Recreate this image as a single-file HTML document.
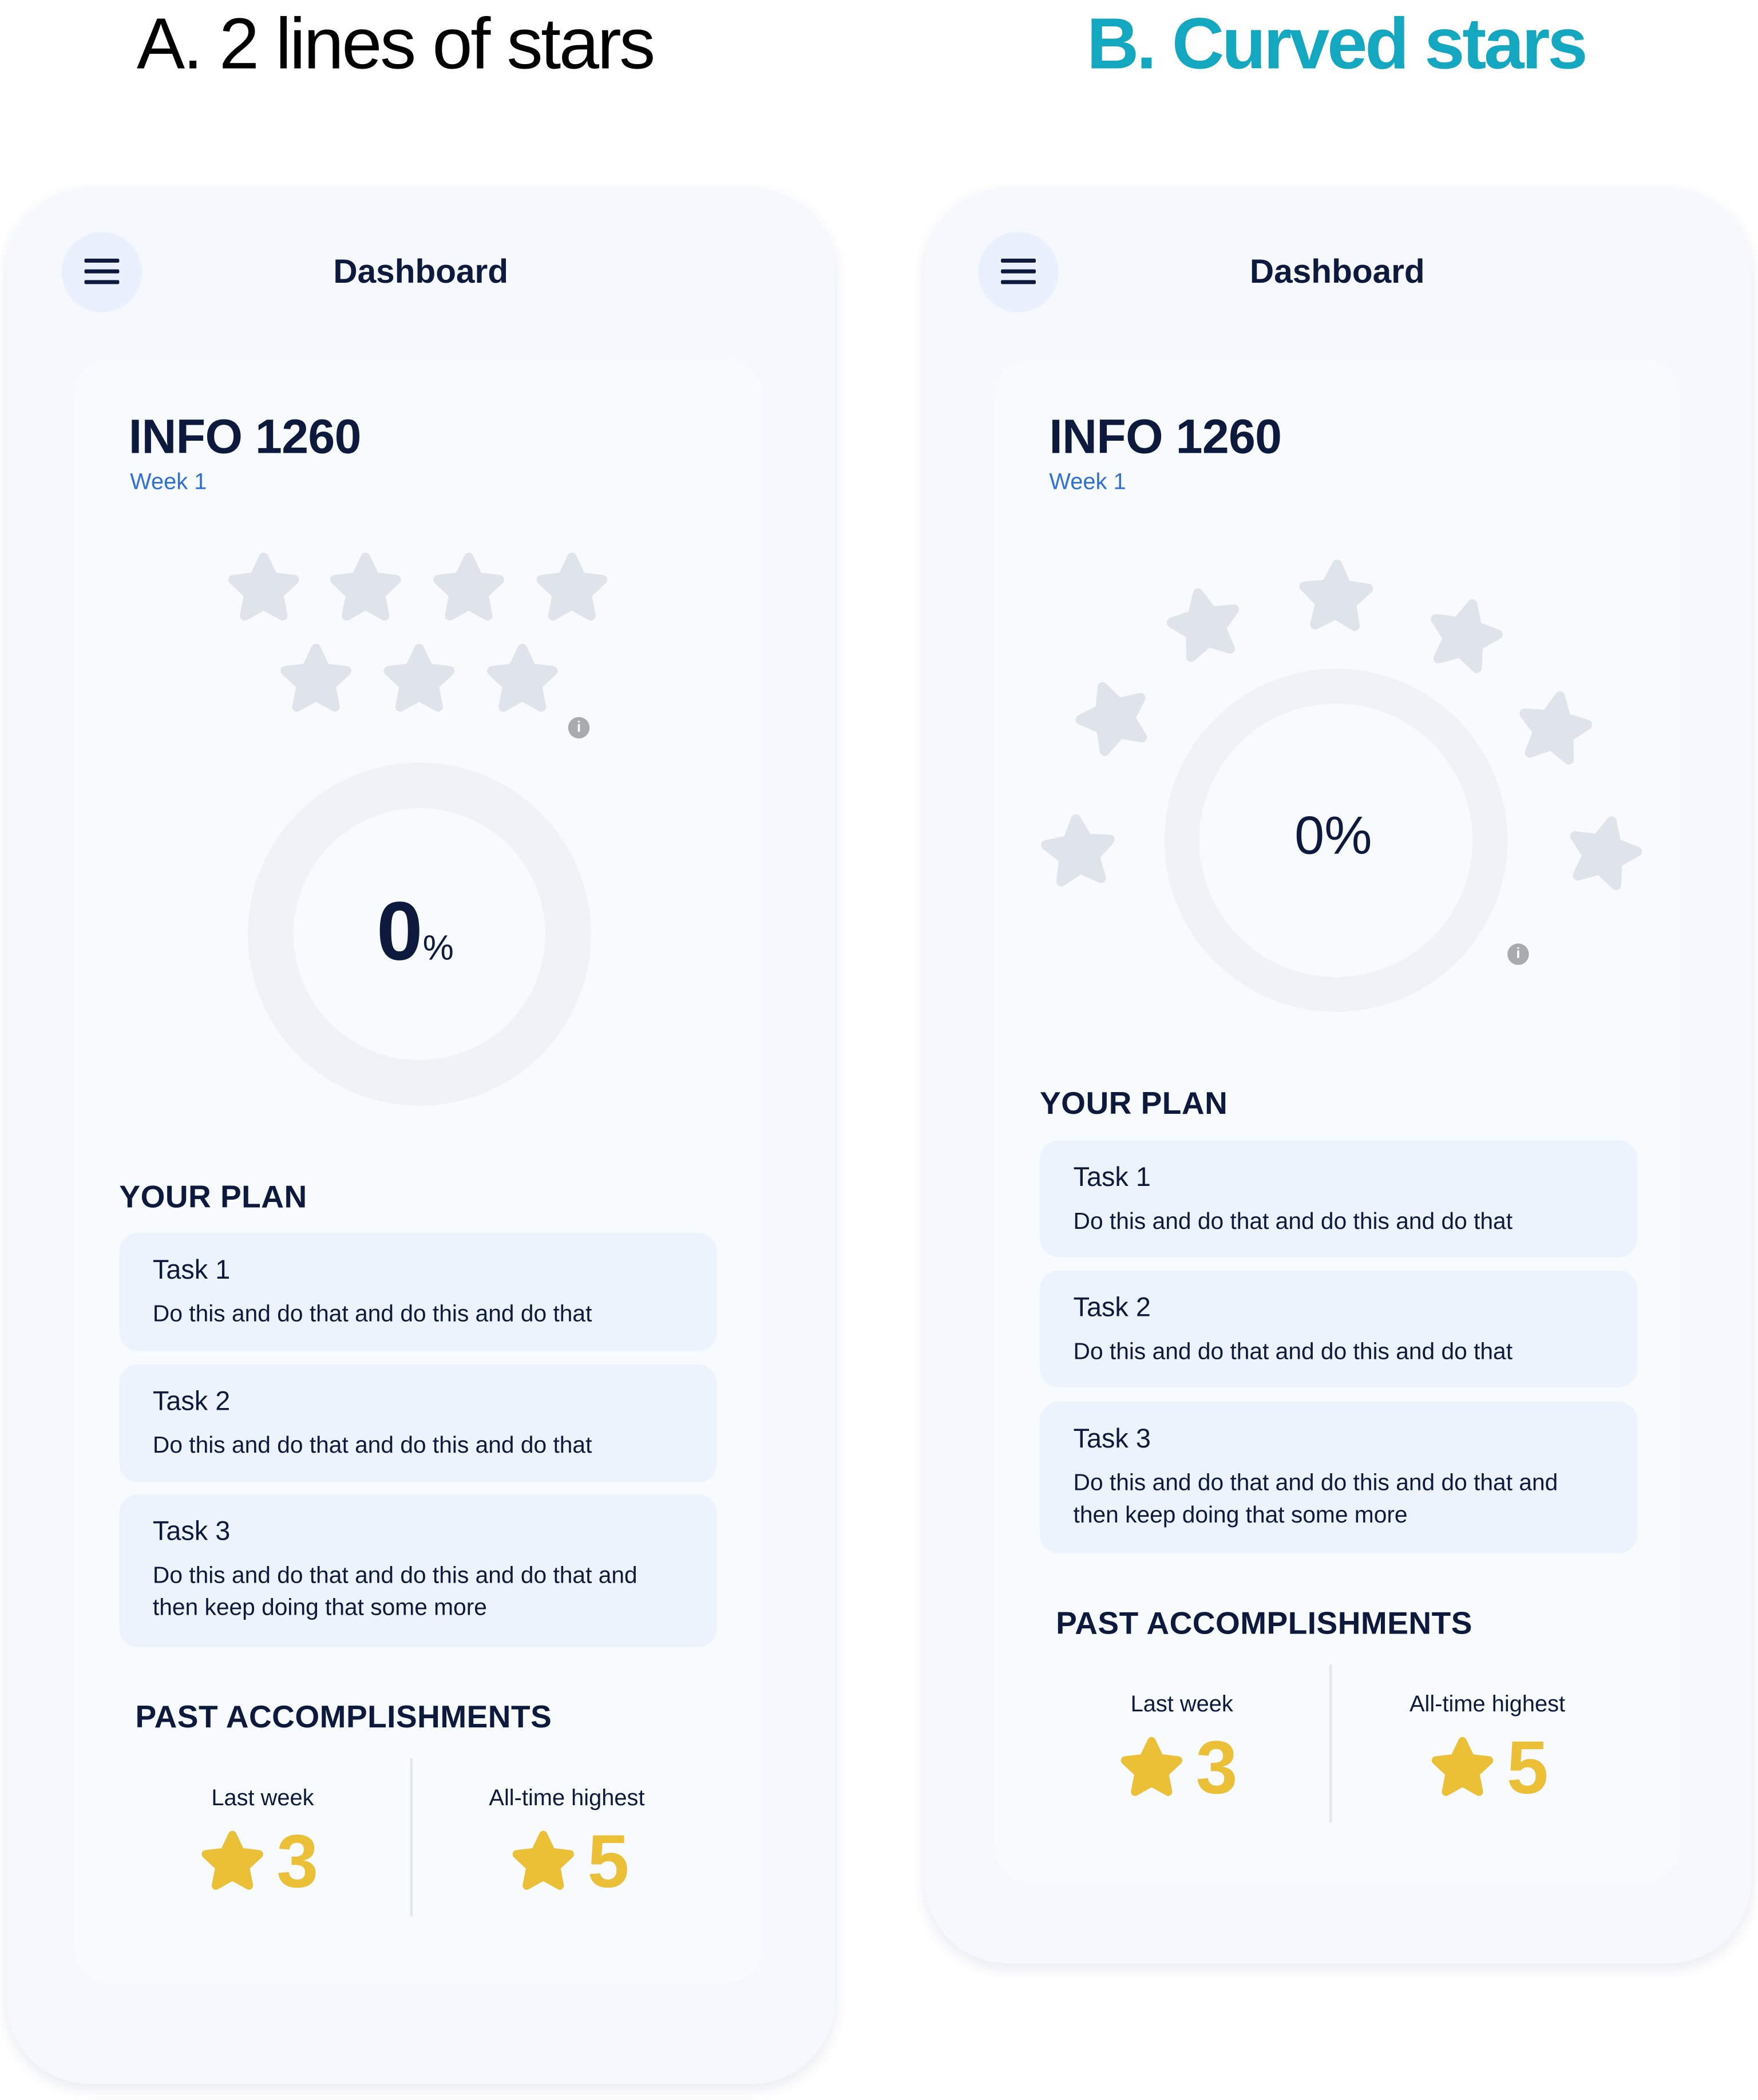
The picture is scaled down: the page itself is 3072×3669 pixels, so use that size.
<!DOCTYPE html>
<html><head><meta charset="utf-8"><style>
html,body{margin:0;padding:0;background:#fff;width:3072px;height:3668px;overflow:hidden}
#w{position:absolute;left:0;top:0;width:1312px;height:1567px;transform:scale(2.3415);transform-origin:0 0;font-family:"Liberation Sans",sans-serif;color:#0d1a3d}
.abs{position:absolute}
.title{position:absolute;top:2px;font-size:54px;letter-spacing:-1.5px;white-space:nowrap}
.phone{position:absolute;background:#f5f8fd;border-radius:62px;box-shadow:0 4px 10px rgba(40,60,100,.10)}
.ham{position:absolute;width:60px;height:60px;border-radius:50%;background:#eaf1fc}
.ham i{position:absolute;left:17px;width:26px;height:3px;background:#0d1a3d;border-radius:1px}
.dash{position:absolute;font-size:25px;font-weight:bold;transform:translateX(-50%);top:189px}
.card{position:absolute;background:#f8fbfe;border-radius:28px}
.h1{position:absolute;font-size:36px;font-weight:bold;letter-spacing:-.3px}
.wk{position:absolute;font-size:17px;color:#2f6fd6}
.sec{position:absolute;font-size:23.5px;font-weight:bold;letter-spacing:.2px}
.task{position:absolute;background:#ecf3fd;border-radius:14px;width:446px}
.task b{position:absolute;left:25px;top:17px;font-size:20px;font-weight:normal}
.task span{position:absolute;left:25px;top:48px;font-size:17.4px;line-height:24px;width:395px}
.lbl{position:absolute;font-size:17px;transform:translateX(-50%);white-space:nowrap}
.big{position:absolute;transform:translateX(-50%);white-space:nowrap;color:#ebbf36;font-size:56px;font-weight:bold;display:flex;align-items:center;gap:8px}
.div{position:absolute;width:2px;background:#e3e7ee}
.info{position:absolute;width:16px;height:16px;border-radius:50%;background:#a8aab0;color:#fff;font-size:11px;font-weight:bold;text-align:center;line-height:16px}
</style></head><body><div id="w">
<svg width="0" height="0" style="position:absolute"><defs>
<g id="st"><polygon points="12,2.5 14.9,8.6 21.5,9.4 16.6,14 17.9,20.6 12,17.3 6.1,20.6 7.4,14 2.5,9.4 9.1,8.6" stroke-width="3" stroke-linejoin="round"/></g>
</defs></svg>

<div class="title" style="left:102px;color:#000">A. 2 lines of stars</div>
<div class="title" style="left:811px;color:#14a8c0;font-weight:bold;letter-spacing:-1.8px">B. Curved stars</div>

<!-- Phone A -->
<div class="phone" style="left:5px;top:140px;width:618px;height:1415px"></div>
<div class="ham" style="left:46px;top:173px"><i style="top:20px"></i><i style="top:28px"></i><i style="top:36px"></i></div>
<div class="dash" style="left:314px">Dashboard</div>
<div class="card" style="left:55px;top:268px;width:514px;height:1212px"></div>
<div class="h1" style="left:96px;top:305px">INFO 1260</div>
<div class="wk" style="left:97px;top:350px">Week 1</div>
<svg class="abs" style="left:0;top:0" width="640" height="900" fill="#dfe3ea" stroke="#dfe3ea">
<use href="#st" transform="translate(168,410) scale(2.4)"/>
<use href="#st" transform="translate(244,410) scale(2.4)"/>
<use href="#st" transform="translate(321,410) scale(2.4)"/>
<use href="#st" transform="translate(398,410) scale(2.4)"/>
<use href="#st" transform="translate(207,478) scale(2.4)"/>
<use href="#st" transform="translate(284,478) scale(2.4)"/>
<use href="#st" transform="translate(361,478) scale(2.4)"/>
<circle cx="313" cy="697" r="111" fill="none" stroke="#eff2f6" stroke-width="34"/>
</svg>
<div class="info" style="left:424px;top:535px">i</div>
<div class="abs" style="left:281px;top:660px;font-size:62px;font-weight:bold;white-space:nowrap">0<span style="font-size:26px;font-weight:normal">%</span></div>
<div class="sec" style="left:89px;top:880px">YOUR PLAN</div>
<div class="task" style="left:89px;top:920px;height:88px"><b>Task 1</b><span>Do this and do that and do this and do that</span></div>
<div class="task" style="left:89px;top:1018px;height:88px"><b>Task 2</b><span>Do this and do that and do this and do that</span></div>
<div class="task" style="left:89px;top:1115px;height:114px"><b>Task 3</b><span>Do this and do that and do this and do that and then keep doing that some more</span></div>
<div class="sec" style="left:101px;top:1268px">PAST ACCOMPLISHMENTS</div>
<div class="div" style="left:306px;top:1312px;height:118px"></div>
<div class="lbl" style="left:196px;top:1332px">Last week</div>
<div class="lbl" style="left:423px;top:1332px">All-time highest</div>
<div class="big" style="left:193px;top:1356px"><svg width="50" height="50" viewBox="0 0 24 24" fill="#ebbf36" stroke="#ebbf36"><use href="#st"/></svg>3</div>
<div class="big" style="left:425px;top:1356px"><svg width="50" height="50" viewBox="0 0 24 24" fill="#ebbf36" stroke="#ebbf36"><use href="#st"/></svg>5</div>

<!-- Phone B -->
<div class="phone" style="left:690px;top:140px;width:617px;height:1325px"></div>
<div class="ham" style="left:730px;top:173px"><i style="top:20px"></i><i style="top:28px"></i><i style="top:36px"></i></div>
<div class="dash" style="left:998px">Dashboard</div>
<div class="card" style="left:742px;top:268px;width:512px;height:1137px"></div>
<div class="h1" style="left:783px;top:305px">INFO 1260</div>
<div class="wk" style="left:783px;top:350px">Week 1</div>
<svg class="abs" style="left:0;top:0" width="1312" height="800" fill="#dfe3ea" stroke="#dfe3ea">
<use href="#st" transform="translate(805,635) rotate(-5) scale(2.5) translate(-12,-12)"/>
<use href="#st" transform="translate(831,535) rotate(-20) scale(2.5) translate(-12,-12)"/>
<use href="#st" transform="translate(899,466) rotate(-12) scale(2.5) translate(-12,-12)"/>
<use href="#st" transform="translate(997,445) rotate(2) scale(2.5) translate(-12,-12)"/>
<use href="#st" transform="translate(1093,474) rotate(14) scale(2.5) translate(-12,-12)"/>
<use href="#st" transform="translate(1160,543) rotate(10) scale(2.5) translate(-12,-12)"/>
<use href="#st" transform="translate(1197,636) rotate(14) scale(2.5) translate(-12,-12)"/>
<circle cx="997" cy="627" r="115" fill="none" stroke="#eff2f6" stroke-width="26"/>
</svg>
<div class="info" style="left:1125px;top:704px">i</div>
<div class="abs" style="left:995px;top:602px;font-size:40px;font-weight:500;transform:translateX(-50%)">0%</div>
<div class="sec" style="left:776px;top:810px">YOUR PLAN</div>
<div class="task" style="left:776px;top:851px;height:87px"><b>Task 1</b><span>Do this and do that and do this and do that</span></div>
<div class="task" style="left:776px;top:948px;height:87px"><b>Task 2</b><span>Do this and do that and do this and do that</span></div>
<div class="task" style="left:776px;top:1046px;height:113px"><b>Task 3</b><span>Do this and do that and do this and do that and then keep doing that some more</span></div>
<div class="sec" style="left:788px;top:1198px">PAST ACCOMPLISHMENTS</div>
<div class="div" style="left:992px;top:1242px;height:118px"></div>
<div class="lbl" style="left:882px;top:1262px">Last week</div>
<div class="lbl" style="left:1110px;top:1262px">All-time highest</div>
<div class="big" style="left:879px;top:1286px"><svg width="50" height="50" viewBox="0 0 24 24" fill="#ebbf36" stroke="#ebbf36"><use href="#st"/></svg>3</div>
<div class="big" style="left:1111px;top:1286px"><svg width="50" height="50" viewBox="0 0 24 24" fill="#ebbf36" stroke="#ebbf36"><use href="#st"/></svg>5</div>
</div></body></html>
